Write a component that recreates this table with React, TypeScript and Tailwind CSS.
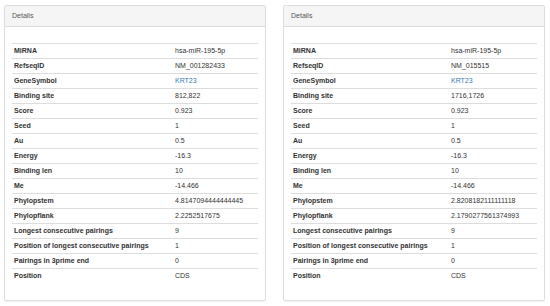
import React from 'react';

interface Row {
  label: string;
  value: string;
  link?: boolean;
}

const left: Row[] = [
  { label: 'MiRNA', value: 'hsa-miR-195-5p' },
  { label: 'RefseqID', value: 'NM_001282433' },
  { label: 'GeneSymbol', value: 'KRT23', link: true },
  { label: 'Binding site', value: '812,822' },
  { label: 'Score', value: '0.923' },
  { label: 'Seed', value: '1' },
  { label: 'Au', value: '0.5' },
  { label: 'Energy', value: '-16.3' },
  { label: 'Binding len', value: '10' },
  { label: 'Me', value: '-14.466' },
  { label: 'Phylopstem', value: '4.8147094444444445' },
  { label: 'Phylopflank', value: '2.2252517675' },
  { label: 'Longest consecutive pairings', value: '9' },
  { label: 'Position of longest consecutive pairings', value: '1' },
  { label: 'Pairings in 3prime end', value: '0' },
  { label: 'Position', value: 'CDS' },
];

const right: Row[] = [
  { label: 'MiRNA', value: 'hsa-miR-195-5p' },
  { label: 'RefseqID', value: 'NM_015515' },
  { label: 'GeneSymbol', value: 'KRT23', link: true },
  { label: 'Binding site', value: '1716,1726' },
  { label: 'Score', value: '0.923' },
  { label: 'Seed', value: '1' },
  { label: 'Au', value: '0.5' },
  { label: 'Energy', value: '-16.3' },
  { label: 'Binding len', value: '10' },
  { label: 'Me', value: '-14.466' },
  { label: 'Phylopstem', value: '2.8208182111111118' },
  { label: 'Phylopflank', value: '2.1790277561374993' },
  { label: 'Longest consecutive pairings', value: '9' },
  { label: 'Position of longest consecutive pairings', value: '1' },
  { label: 'Pairings in 3prime end', value: '0' },
  { label: 'Position', value: 'CDS' },
];

const DetailsPanel: React.FC<{ rows: Row[]; labelWidth: string }> = ({ rows, labelWidth }) => (
  <div className="w-[262px] h-[296px] bg-white border border-[#dddddd] rounded-[2px] shadow-[0_1px_1px_rgba(0,0,0,0.05)] flex flex-col">
    <div className="h-[21px] bg-[#f5f5f5] border-b border-[#dddddd] px-[7px] flex items-center text-[7px] text-[#555]">
      Details
    </div>
    <div className="px-[7px] pt-[16px]">
      <div className="border-t border-[#dddddd]">
        {rows.map((row, i) => (
          <div
            key={row.label}
            className={`flex h-[15px] items-center text-[7px] text-[#333] ${i < rows.length - 1 ? 'border-b border-[#dddddd]' : ''}`}
          >
            <div className={`${labelWidth} shrink-0 pl-[2px] font-bold`}>{row.label}</div>
            <div className={row.link ? 'text-[#337ab7]' : ''}>{row.value}</div>
          </div>
        ))}
      </div>
    </div>
  </div>
);

export default function App() {
  return (
    <div className="w-[550px] h-[306px] bg-white flex gap-[17px] pl-[4px] pt-[5px] font-['Liberation_Sans',Arial,sans-serif]">
      <DetailsPanel rows={left} labelWidth="w-[163px]" />
      <DetailsPanel rows={right} labelWidth="w-[160px]" />
    </div>
  );
}
